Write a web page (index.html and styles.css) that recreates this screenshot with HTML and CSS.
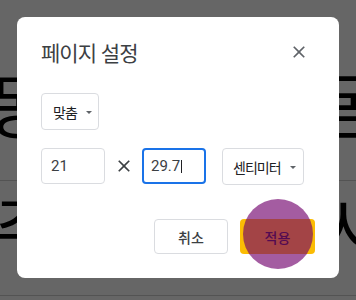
FILE: index.html
```html
<!DOCTYPE html>
<html lang="ko">
<head>
  <meta charset="UTF-8" />
  <meta name="viewport" content="width=device-width, initial-scale=1.0" />
  <title>페이지 설정</title>
  <link rel="stylesheet" href="styles.css">
</head>
<body>

  <div class="doc">
    <div class="doc-line first"><span>동</span><span>몸</span></div>
    <div class="rule"></div>
    <div class="doc-line second"><span>주</span><span>사</span></div>
    <div class="rule last"></div>
  </div>

  <div class="scrim"></div>

  <div class="dialog">
    <div class="dialog-head">
      <h2>페이지 설정</h2>
      <button class="icon-btn close">
        <svg width="20" height="20" viewBox="0 0 24 24"><path d="M19 6.41L17.59 5 12 10.59 6.41 5 5 6.41 10.59 12 5 17.59 6.41 19 12 13.41 17.59 19 19 17.59 13.41 12z"/></svg>
      </button>
    </div>

    <div class="select fit">맞춤<span class="caret"></span></div>

    <div class="size-row">
      <div class="field">21</div>
      <svg class="times" width="20" height="20" viewBox="0 0 24 24"><path d="M19 6.41L17.59 5 12 10.59 6.41 5 5 6.41 10.59 12 5 17.59 6.41 19 12 13.41 17.59 19 19 17.59 13.41 12z"/></svg>
      <div class="field focused">29.7<span class="cursor"></span></div>
      <div class="select unit">센티미터<span class="caret"></span></div>
    </div>

    <div class="actions">
      <button class="btn">취소</button>
      <button class="btn primary">적용<span class="touch"></span></button>
    </div>
  </div>

</body>
</html>
```

FILE: styles.css
```css
body {
  margin: 0;
  width: 356px;
  height: 300px;
  overflow: hidden;
  font-family: Roboto, "Noto Sans CJK KR", sans-serif;
  background: #fff;
  color: #202124;
  position: relative;
}

/* document behind the dialog */
.doc {
  padding-top: 58px;
  overflow: hidden;
  height: 300px;
  box-sizing: border-box;
}

.doc-line {
  display: flex;
  justify-content: space-between;
  font-family: "Noto Sans CJK KR", sans-serif;
  font-size: 70px;
  line-height: 90px;
  color: #000;
  margin: 0 -30px 0 -7px;
}

.doc-line.first {
  margin-left: -13px;
}

.rule {
  height: 1px;
  background: #cfcfcf;
  margin-top: 32px;
}

.rule.last {
  margin-top: 24px;
}

.scrim {
  position: fixed;
  inset: 0;
  background: rgba(0, 0, 0, 0.6);
}

/* dialog */
.dialog {
  position: absolute;
  left: 17px;
  top: 17px;
  width: 322px;
  height: 261px;
  box-sizing: border-box;
  padding: 21px 24px 24px;
  background: #fff;
  border-radius: 8px;
  display: flex;
  flex-direction: column;
}

.dialog-head {
  display: flex;
  align-items: center;
  justify-content: space-between;
  height: 28px;
}

.dialog-head h2 {
  margin: 0;
  font-family: "Noto Sans CJK KR", sans-serif;
  font-size: 21px;
  font-weight: 400;
  line-height: 28px;
  letter-spacing: -1px;
  color: #3c4043;
}

.icon-btn {
  border: none;
  background: none;
  padding: 0;
  width: 20px;
  height: 20px;
  margin-right: 6px;
  fill: #5f6368;
}

.icon-btn svg {
  display: block;
}

.select {
  display: flex;
  align-items: center;
  box-sizing: border-box;
  height: 37px;
  border: 1px solid #dadce0;
  border-radius: 4px;
  font-family: "Noto Sans CJK KR", sans-serif;
  font-size: 14px;
  letter-spacing: -1px;
  color: #202124;
}

.select.fit {
  width: 58px;
  margin-top: 27px;
  padding: 0 6px 0 11px;
}

.select.unit {
  width: 82px;
  margin-left: 16px;
  padding: 0 7px 0 10px;
}

.caret {
  margin-left: auto;
  width: 0;
  height: 0;
  border-left: 3.5px solid transparent;
  border-right: 3.5px solid transparent;
  border-top: 3.5px solid #5f6368;
  margin-top: 1px;
}

.size-row {
  display: flex;
  align-items: flex-start;
  margin-top: 18px;
}

.field {
  box-sizing: border-box;
  width: 64px;
  height: 36px;
  border: 1px solid #dadce0;
  border-radius: 4px;
  padding: 0 9px;
  font-size: 15px;
  line-height: 34px;
  color: #3c4043;
  display: flex;
  align-items: center;
}

.field.focused {
  border: 2px solid #1a73e8;
  padding: 0 7px;
}

.cursor {
  width: 1px;
  height: 13px;
  background: #202124;
  margin-left: 1px;
}

.times {
  margin: 8px 8px 0 9px;
  fill: #3c4043;
}

.actions {
  display: flex;
  justify-content: flex-end;
  gap: 12px;
  margin-top: auto;
}

.btn {
  position: relative;
  box-sizing: border-box;
  height: 35px;
  width: 74px;
  border: 1px solid #dadce0;
  border-radius: 4px;
  background: #fff;
  font-family: "Noto Sans CJK KR", sans-serif;
  font-size: 14px;
  font-weight: 500;
  color: #3c4043;
  padding: 0;
}

.btn.primary {
  width: 75px;
  border: none;
  background: #fbbc04;
  color: #202124;
}

.touch {
  position: absolute;
  left: 3px;
  top: -20px;
  width: 70px;
  height: 70px;
  border-radius: 50%;
  background: rgba(112, 0, 108, 0.64);
}
```
